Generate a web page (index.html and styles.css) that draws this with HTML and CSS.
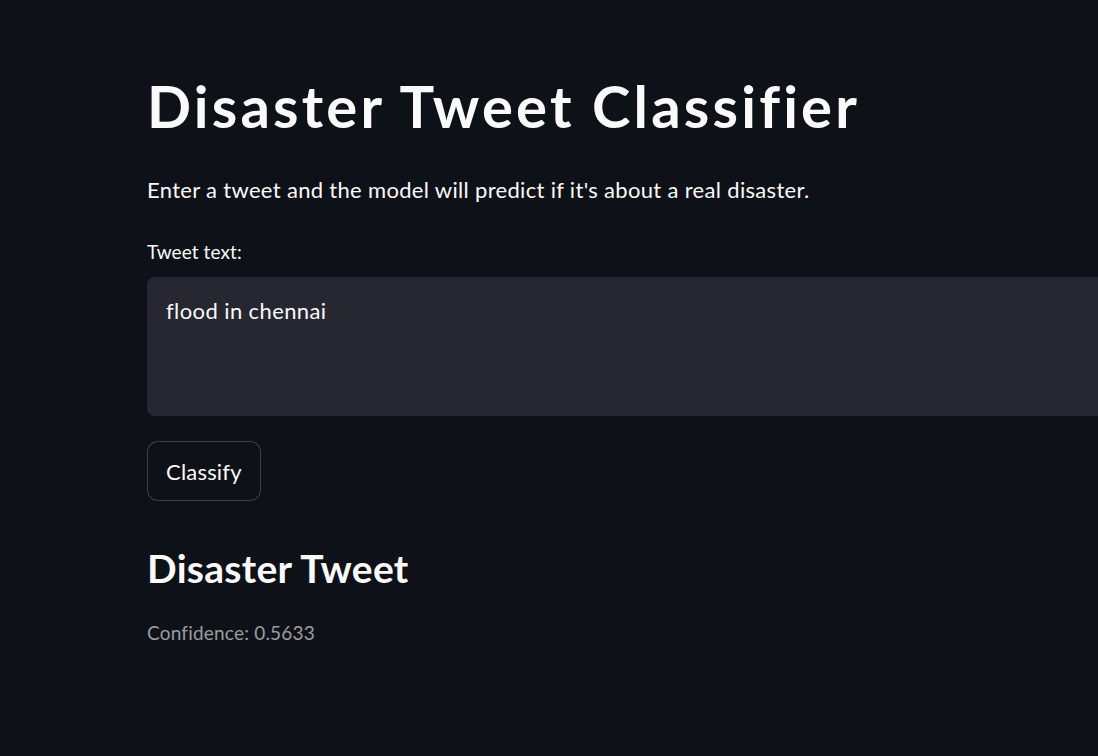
FILE: index.html
```html
<!DOCTYPE html>
<html lang="en">
<head>
<meta charset="utf-8">
<title>Disaster Tweet Classifier</title>
<link rel="stylesheet" href="styles.css">
</head>
<body>
<main class="page">
  <h1 class="title">Disaster Tweet Classifier</h1>
  <p class="intro">Enter a tweet and the model will predict if it's about a real disaster.</p>
  <label class="field-label" for="tweet">Tweet text:</label>
  <textarea id="tweet" class="tweet-input">flood in chennai</textarea>
  <button class="btn" type="button">Classify</button>
  <h2 class="result">Disaster Tweet</h2>
  <p class="confidence">Confidence: 0.5633</p>
</main>
</body>
</html>
```
FILE: styles.css
```css
html, body {
  margin: 0;
  padding: 0;
  background: #0e1117;
  overflow: hidden;
}

body {
  width: 1098px;
  height: 756px;
  font-family: "Lato", "Noto Sans", sans-serif;
  font-variant-ligatures: none;
  color: #fafafa;
}

.page {
  display: flex;
  flex-direction: column;
  align-items: flex-start;
  padding: 71px 0 0 147px;
}

.title {
  margin: 0;
  font-size: 58px;
  font-weight: 700;
  line-height: 1.2;
  letter-spacing: 3.2px;
}

.intro {
  margin: 31px 0 0;
  font-size: 22px;
  line-height: 1.6;
  letter-spacing: 0.32px;
}

.field-label {
  margin-top: 32px;
  font-size: 19px;
  line-height: 1.4;
  letter-spacing: 0.1px;
}

.tweet-input {
  box-sizing: border-box;
  margin-top: 12px;
  width: 1000px;
  height: 139px;
  padding: 19px 19px;
  border: none;
  border-radius: 8px;
  background: #262730;
  color: #fafafa;
  font-family: inherit;
  font-size: 22px;
  line-height: 1.4;
  letter-spacing: 0.4px;
  resize: none;
  outline: none;
}

.btn {
  box-sizing: border-box;
  margin-top: 25px;
  height: 60px;
  padding: 0 18px;
  border: 1px solid rgba(250, 250, 250, 0.2);
  border-radius: 11px;
  background: #0e1117;
  color: #fafafa;
  font-family: inherit;
  font-size: 22px;
  letter-spacing: 0.2px;
}

.result {
  margin: 44px 0 0;
  font-size: 39px;
  font-weight: 700;
  line-height: 1.2;
  letter-spacing: 0.3px;
}

.confidence {
  margin: 26px 0 0;
  font-size: 19px;
  line-height: 1.6;
  letter-spacing: 0.2px;
  color: rgba(250, 250, 250, 0.6);
}
```
